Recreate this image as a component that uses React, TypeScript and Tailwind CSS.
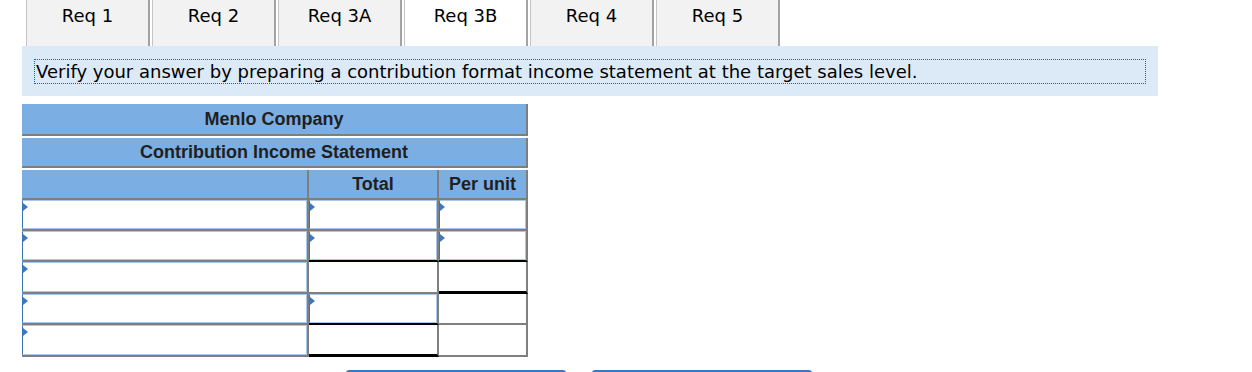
import React from 'react';

const tabs = ['Req 1', 'Req 2', 'Req 3A', 'Req 3B', 'Req 4', 'Req 5'];
const active = 'Req 3B';

type Cell = { input?: boolean; bottom?: 'gray' | 'thin' | 'thick' };

// label, total, per unit
const rows: { h: string; cells: Cell[] }[] = [
  { h: 'h-[31px]', cells: [{ input: true }, { input: true }, { input: true }] },
  { h: 'h-[31px]', cells: [{ input: true }, { input: true, bottom: 'thin' }, { input: true, bottom: 'thin' }] },
  { h: 'h-[32px]', cells: [{ input: true }, {}, { bottom: 'thick' }] },
  { h: 'h-[31px]', cells: [{ input: true }, { input: true, bottom: 'thin' }, {}] },
  { h: 'h-[32px]', cells: [{ input: true }, { bottom: 'thick' }, {}] },
];

function Field() {
  return (
    <div className="relative h-full w-full bg-white border-l border-l-[#3b73b9] border-t border-t-[#a9c8ec] border-r border-r-[#a9c8ec] border-b border-b-[#a9c8ec]">
      <span className="absolute left-0 top-[2px] w-0 h-0 border-y-[4px] border-y-transparent border-l-[5px] border-l-[#3b78c4]" />
    </div>
  );
}

function BodyCell({ cell, width }: { cell: Cell; width: string }) {
  const bottom =
    cell.bottom === 'thick'
      ? 'border-b-[3px] border-b-black'
      : cell.bottom === 'thin'
        ? 'border-b-2 border-b-black'
        : 'border-b-2 border-b-[#7f7f7f]';
  return (
    <div className={`${width} h-full border-r-2 border-r-[#7f7f7f] ${bottom} bg-white`}>
      {cell.input && <Field />}
    </div>
  );
}

export default function App() {
  return (
    <div className="w-[1252px] h-[372px] overflow-hidden bg-white font-['DejaVu_Sans',sans-serif] text-black">
      {/* Tabs */}
      <div className="flex gap-[2px] pl-[26px]">
        {tabs.map((t) => (
          <div
            key={t}
            className={`w-[124px] h-[46px] border-l border-l-[#c4c4c4] border-r-2 border-r-[#a3a3a3] text-center pt-[4px] text-[18px] leading-[24px] ${t === active ? 'bg-white' : 'bg-[#f2f2f2]'}`}
          >
            {t}
          </div>
        ))}
      </div>

      {/* Instructions */}
      <div className="ml-[22px] w-[1136px] h-[50px] bg-[#dceaf7] pt-[13px] pl-[12px] pr-[12px]">
        <div className="h-[25px] border border-dotted border-[#1f5eb0] pl-px text-[18px] leading-[23px]">
          Verify your answer by preparing a contribution format income statement at the target sales level.
        </div>
      </div>

      {/* Statement */}
      <div className="ml-[22px] mt-[8px] w-[506px] font-['Liberation_Sans',Arial,sans-serif] font-bold text-[18px] text-[#1f1f1f]">
        <div className="h-[32px] bg-[#7baee3] border-b-2 border-r-2 border-[#7f7f7f] flex items-center justify-center">
          Menlo Company
        </div>
        <div className="mt-[2px] h-[30px] bg-[#7baee3] border-b-2 border-r-2 border-[#7f7f7f] flex items-center justify-center">
          Contribution Income Statement
        </div>
        <div className="mt-[2px] h-[30px] flex">
          <div className="w-[287px] bg-[#7baee3] border-b-2 border-r-2 border-[#7f7f7f]" />
          <div className="w-[130px] bg-[#7baee3] border-b-2 border-r-2 border-[#7f7f7f] flex items-center justify-center">
            Total
          </div>
          <div className="w-[89px] bg-[#7baee3] border-b-2 border-r-2 border-[#7f7f7f] flex items-center justify-center">
            Per unit
          </div>
        </div>
        {rows.map((r, i) => (
          <div key={i} className={`${r.h} flex`}>
            <BodyCell cell={r.cells[0]} width="w-[287px]" />
            <BodyCell cell={r.cells[1]} width="w-[130px]" />
            <BodyCell cell={r.cells[2]} width="w-[89px]" />
          </div>
        ))}
      </div>

      {/* Buttons, cut off at the bottom edge */}
      <div className="flex gap-[26px] pl-[346px] mt-[13px]">
        <div className="w-[220px] h-[20px] rounded-[3px] bg-[#3a78c2]" />
        <div className="w-[220px] h-[20px] rounded-[3px] bg-[#3a78c2]" />
      </div>
    </div>
  );
}
